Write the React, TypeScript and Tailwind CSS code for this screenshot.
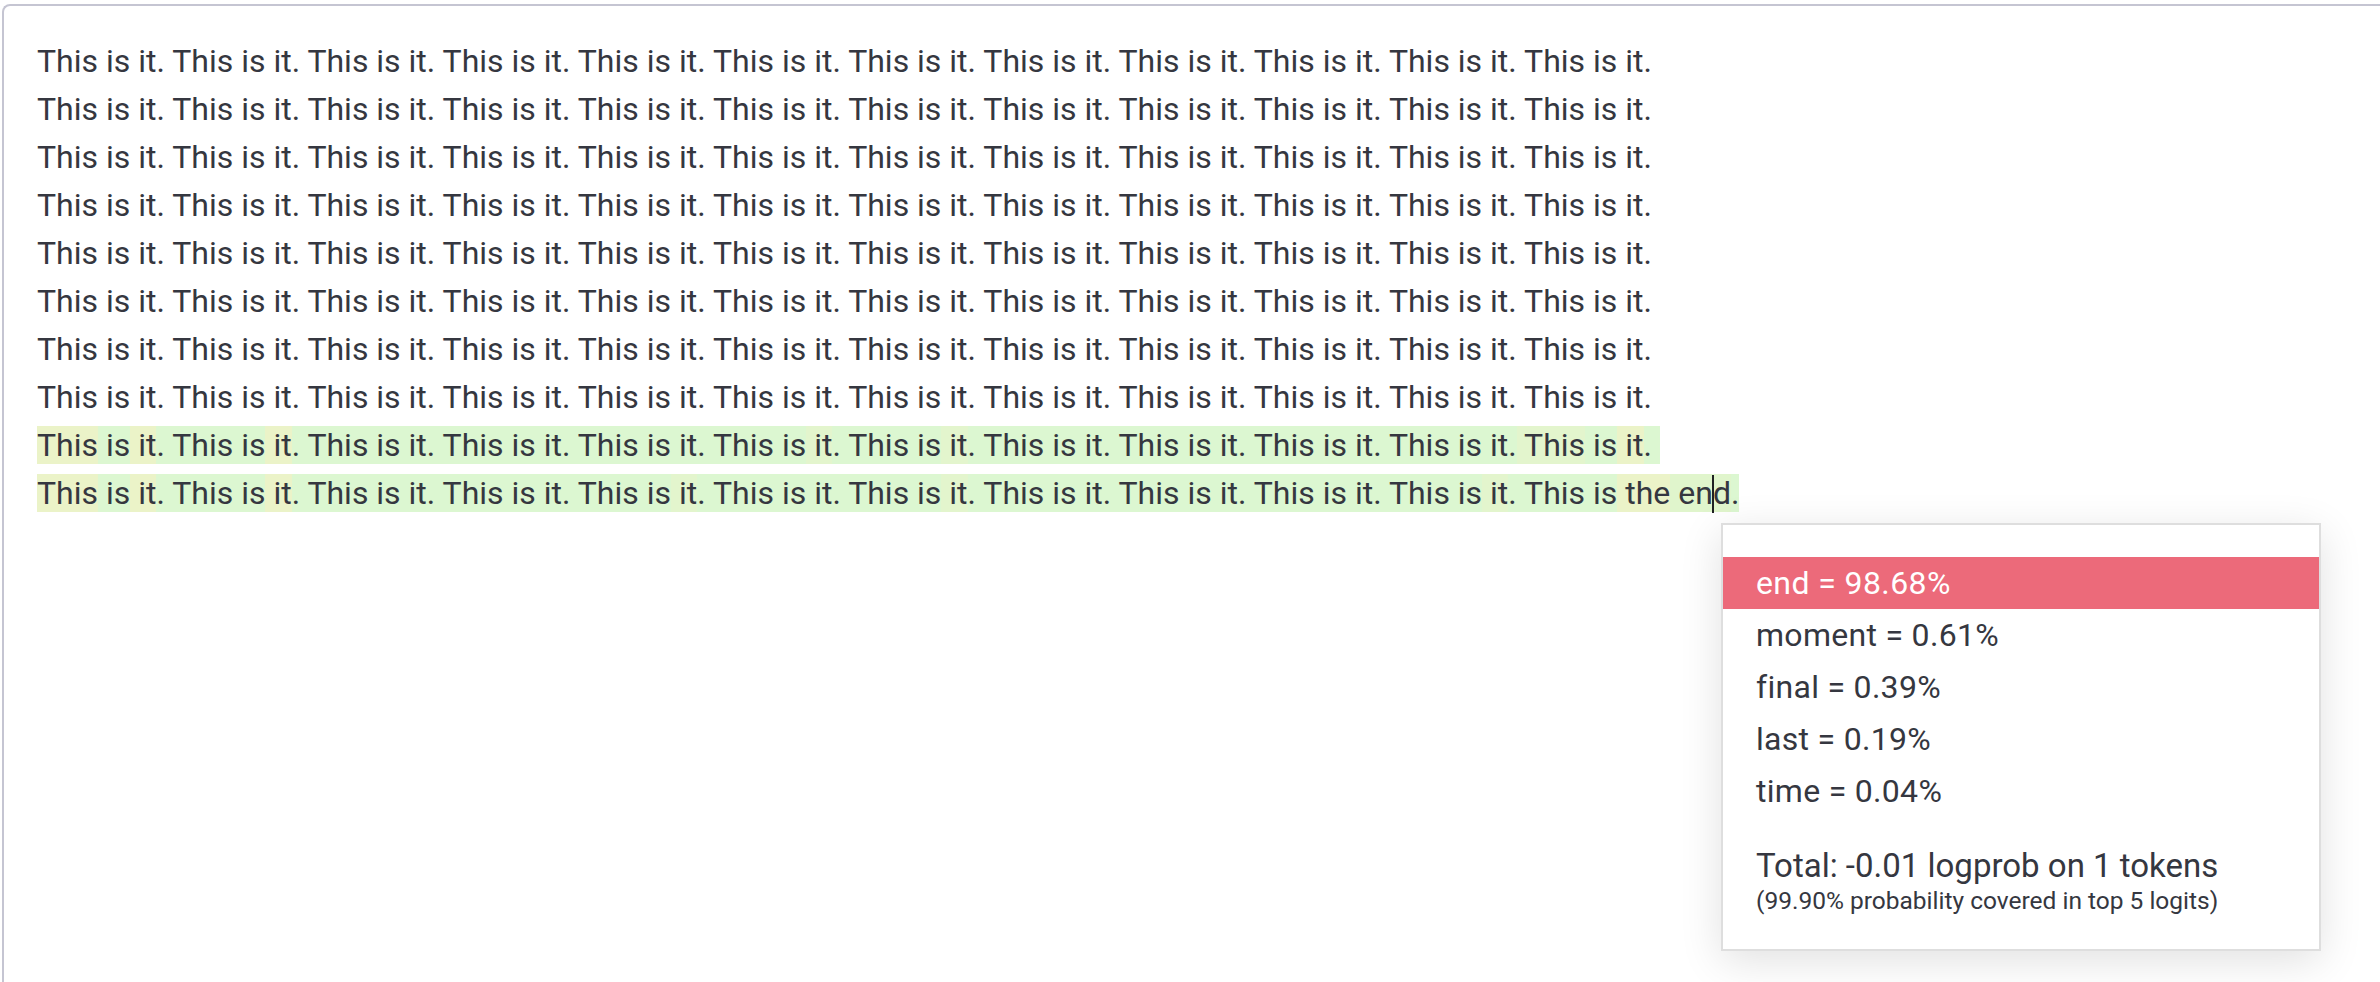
import React from "react";

type Tok = { t: string; c: string };

const G = "bg-[#dcf7d1]";
const Y = "bg-[#ebf3c8]";
const F = "bg-[#e3f5cd]";

const plainLine = Array(12).fill("This is it.").join(" ");

// build a highlighted "This is it." line, with some tokens tinted
function repLine(reps: number, tint: Record<string, string>): Tok[] {
  const out: Tok[] = [];
  for (let i = 1; i <= reps; i++) {
    const lead = i === 1 ? "" : " ";
    out.push({ t: lead + "This", c: tint[`${i}-this`] || G });
    out.push({ t: " is", c: tint[`${i}-is`] || G });
    out.push({ t: " it", c: tint[`${i}-it`] || G });
    out.push({ t: ".", c: G });
  }
  return out;
}

const line9 = repLine(12, {
  "1-this": Y,
  "1-it": Y,
  "2-it": Y,
  "6-it": F,
  "7-it": F,
  "12-this": F,
  "12-it": Y,
});

const line10 = repLine(11, {
  "1-this": Y,
  "1-it": Y,
  "2-it": Y,
  "5-it": F,
  "7-it": F,
  "11-it": F,
});

const options = [
  { label: "end = 98.68%", active: true },
  { label: "moment = 0.61%", active: false },
  { label: "final = 0.39%", active: false },
  { label: "last = 0.19%", active: false },
  { label: "time = 0.04%", active: false },
];

function TokenPopup() {
  return (
    <div className="absolute left-[1721px] top-[523px] w-[600px] h-[428px] bg-white border-2 border-[#dedede] shadow-[0_10px_40px_rgba(0,0,0,0.12)] pt-[32px]">
      {options.map((o) => (
        <div
          key={o.label}
          className={
            o.active
              ? "h-[52px] flex items-center px-[33px] bg-[#ec6a7a] text-white tracking-[0.4px]"
              : "h-[52px] flex items-center px-[33px] text-[#353740] tracking-[0.3px]"
          }
        >
          {o.label}
        </div>
      ))}
      <div className="mt-[29px] px-[33px] text-[#353740]">
        <div className="text-[33px] leading-[40px]">Total: -0.01 logprob on 1 tokens</div>
        <div className="text-[24.5px] leading-[30px]">
          (99.90% probability covered in top 5 logits)
        </div>
      </div>
    </div>
  );
}

export default function App() {
  return (
    <div
      className="relative min-h-screen bg-white pl-[2px] pt-[4px] overflow-hidden text-[32px] text-[#353740]"
      style={{ fontFamily: "Roboto, 'Liberation Sans', sans-serif" }}
    >
      <div className="border-l-2 border-t-2 border-[#c5c5d2] rounded-tl-[8px] min-h-[980px] pl-[33px] pt-[31px] leading-[48px] whitespace-pre">
        {Array.from({ length: 8 }).map((_, i) => (
          <div key={i}>{plainLine}</div>
        ))}
        <div>
          {line9.map((tk, i) => (
            <span key={i} className={tk.c}>
              {tk.t}
            </span>
          ))}
          <span className={`${G} inline-block w-[8px] h-[38px] align-[-8px]`}></span>
        </div>
        <div>
          {line10.map((tk, i) => (
            <span key={i} className={tk.c}>
              {tk.t}
            </span>
          ))}
          <span className={G}> This</span>
          <span className={G}> is</span>
          <span className={Y}> the</span>
          <span className="bg-[#e0f5cc]"> en</span>
          <span className="relative bg-[#e0f5cc]">
            <span className="absolute left-[-1px] top-[1px] w-[2px] h-[38px] bg-[#202123]"></span>
            d
          </span>
          <span className={G}>.</span>
        </div>
      </div>
      <TokenPopup />
    </div>
  );
}
